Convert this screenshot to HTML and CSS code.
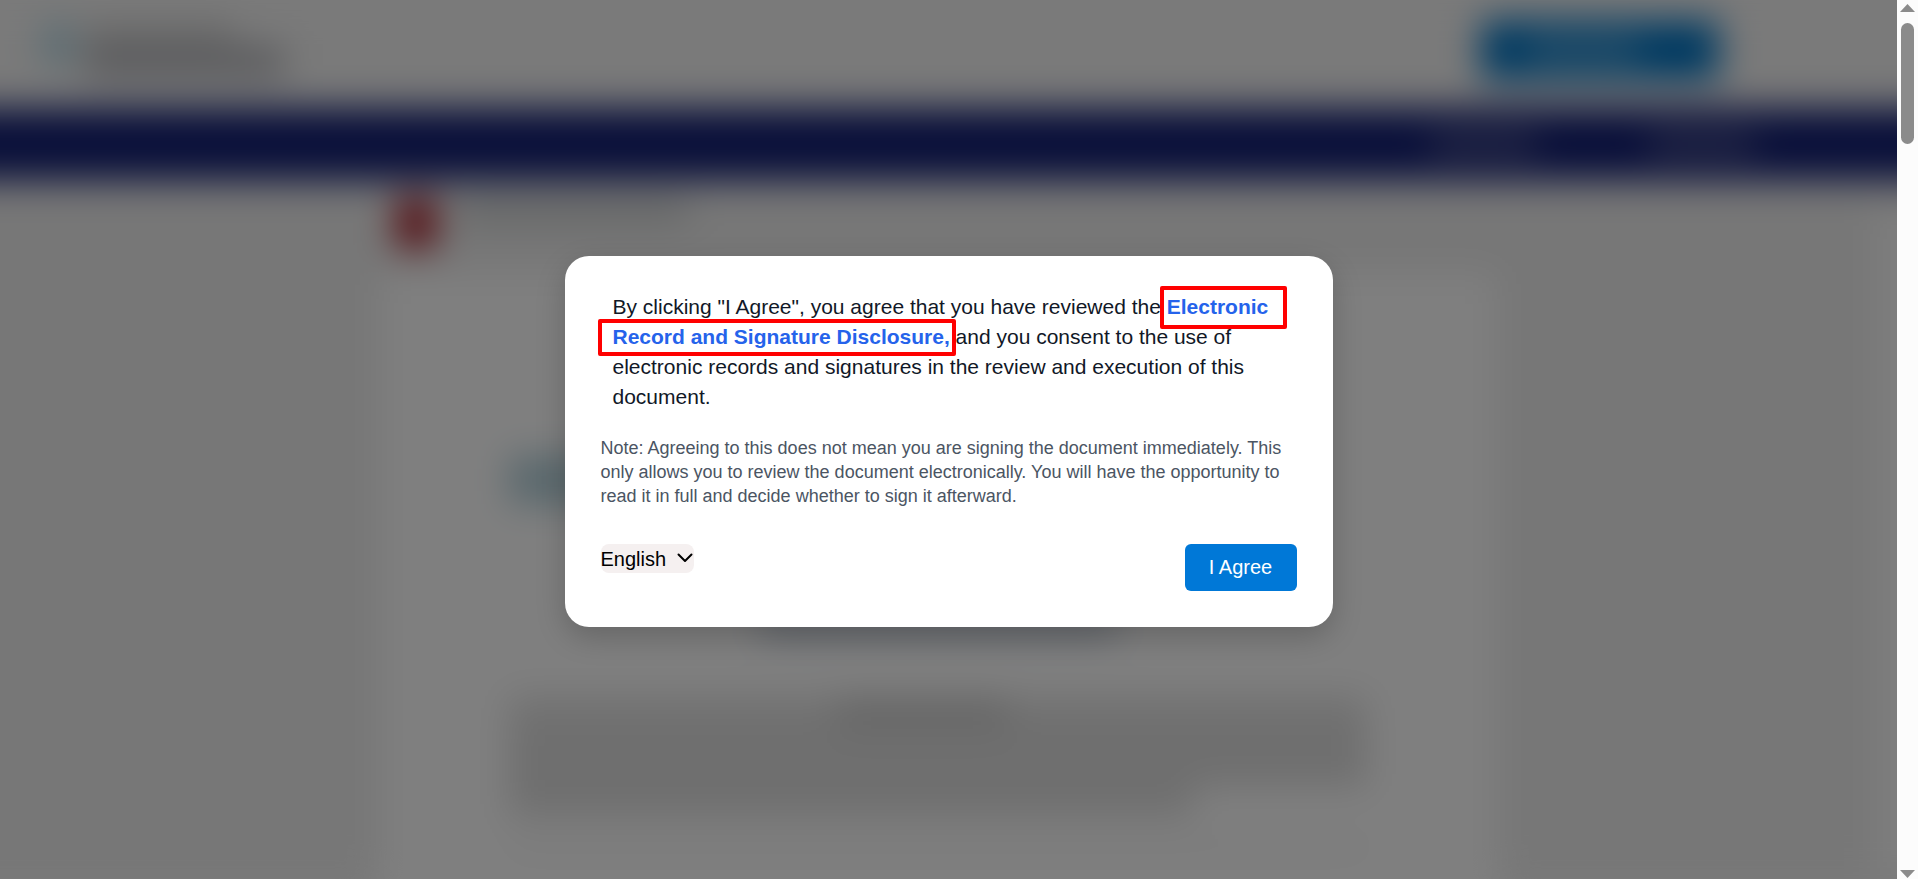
FILE: index.html
```html
<!DOCTYPE html>
<html lang="en">
<head>
<meta charset="utf-8">
<title>Electronic Record and Signature Disclosure</title>
<link rel="stylesheet" href="styles.css">
</head>
<body>
<div class="viewport">
  <div class="stage">
    <div class="page" aria-hidden="true">
      <div class="page-header">
        <div class="brand">
          <span class="brand-mark"></span>
          <span class="brand-lines"><span class="brand-top"></span><span class="brand-name"></span></span>
        </div>
        <div class="cta"><span class="cta-text"></span></div>
      </div>
      <div class="navbar"><span class="nav-item"></span><span class="nav-item"></span></div>
      <div class="reader">
        <div class="reader-body">
          <div class="file-row"><span class="file-icon"></span><span class="file-name"></span></div>
          <div class="sheet">
            <div class="sheet-logo"></div>
            <div class="sheet-title"></div>
            <div class="sheet-text">
              <div class="line line-first"><span class="line-bold"></span></div>
              <div class="line"></div>
              <div class="line"></div>
              <div class="line line-last"></div>
            </div>
            <div class="sheet-rule"></div>
          </div>
        </div>
        <div class="reader-track"></div>
      </div>
    </div>
    <div class="overlay">
      <div class="modal" role="dialog" aria-modal="true" aria-label="Consent">
        <p class="consent">By clicking "I Agree", you agree that you have reviewed the <a class="disclosure" href="#disclosure">Electronic Record and Signature Disclosure,</a> and you consent to the use of electronic records and signatures in the review and execution of this document.</p>
        <p class="note">Note: Agreeing to this does not mean you are signing the document immediately. This only allows you to review the document electronically. You will have the opportunity to read it in full and decide whether to sign it afterward.</p>
        <div class="actions">
          <div class="language">
            <select class="language-select" aria-label="Language"><option>English</option></select>
            <svg class="chevron" viewBox="0 0 16 10" aria-hidden="true"><path d="M1.5 1.5 8 8l6.500-6.500"/></svg>
          </div>
          <button class="agree" type="button">I Agree</button>
        </div>
        <span class="mark mark-first"></span>
        <span class="mark mark-second"></span>
      </div>
    </div>
  </div>
  <div class="scrollbar" aria-hidden="true">
    <svg class="arrow" viewBox="0 0 15 8"><path d="M7.500 0 15 8H0z"/></svg>
    <div class="thumb"></div>
    <svg class="arrow arrow-down" viewBox="0 0 15 8"><path d="M0 0h15L7.500 8z"/></svg>
  </div>
</div>
</body>
</html>
```

FILE: styles.css
```css
* {
  box-sizing: border-box;
}

body {
  margin: 0;
  font-family: "Liberation Sans", Arial, sans-serif;
}

.viewport {
  display: flex;
  height: 100vh;
  overflow: hidden;
}

.stage {
  position: relative;
  flex: 1;
  overflow: hidden;
  background: #f4f4f4;
}

/* Page behind the dialog; it runs past both sides so the blur has no soft edge */
.page {
  display: flex;
  flex-direction: column;
  height: 100%;
  margin: 0 -60px;
  background: #eeeeee;
  filter: blur(18px);
}

.page-header {
  display: flex;
  justify-content: space-between;
  align-items: center;
  height: 108px;
  padding: 0 238px 8px 104px;
  background: #f4f4f4;
}

.brand {
  display: flex;
  gap: 12px;
}

.brand-mark {
  width: 28px;
  height: 44px;
  border-radius: 14px;
  background: #a8d4e4;
}

.brand-lines {
  display: flex;
  flex-direction: column;
  gap: 4px;
  padding-top: 4px;
}

.brand-top {
  width: 150px;
  height: 16px;
  background: #c4c4c4;
}

.brand-name {
  width: 200px;
  height: 32px;
  background: #b6b7bc;
}

.cta {
  display: flex;
  align-items: center;
  width: 238px;
  height: 60px;
  padding-left: 46px;
  border-radius: 6px;
  background: #0074c4;
}

.cta-text {
  width: 112px;
  height: 20px;
  background: #5fa9d8;
}

.navbar {
  display: flex;
  justify-content: flex-end;
  align-items: center;
  gap: 112px;
  height: 72px;
  padding-right: 202px;
  background: #142074;
}

.nav-item {
  width: 106px;
  height: 20px;
  background: #575c92;
}

.reader {
  display: flex;
  flex: 1;
  padding-left: 60px;
}

.reader-body {
  flex: 1;
}

.reader-track {
  width: 82px;
  margin-top: 30px;
  background: #fcfcfc;
}

.file-row {
  display: flex;
  gap: 22px;
  height: 92px;
  padding: 18px 0 0 396px;
}

.file-icon {
  width: 40px;
  height: 50px;
  background: #a81c26;
}

.file-name {
  width: 230px;
  height: 24px;
  background: #c8cbcc;
}

.sheet {
  width: 1118px;
  height: 100%;
  margin: 0 auto;
  padding: 184px 130px 0;
  background: #ffffff;
}

.sheet-logo {
  width: 100px;
  height: 48px;
  background: #b2d0da;
}

.sheet-title {
  width: 356px;
  height: 24px;
  margin: 108px auto 60px;
  background: #bcc6d4;
}

.sheet-text {
  display: flex;
  flex-direction: column;
}

.line {
  height: 30px;
  background: #dedede;
}

.line-first {
  display: flex;
  justify-content: center;
  padding-right: 32px;
  background: #e2e2e2;
}

.line-bold {
  width: 170px;
  background: #cccccc;
}

.line-last {
  width: 684px;
}

.sheet-rule {
  height: 4px;
  margin-top: 28px;
  background: #d8d8d8;
}

/* Consent dialog */
.overlay {
  position: absolute;
  inset: 0;
  display: flex;
  justify-content: center;
  align-items: center;
  padding-top: 4px;
  background: rgba(0, 0, 0, 0.5);
}

.modal {
  position: relative;
  width: 768px;
  padding: 36px;
  border-radius: 24px;
  background: #ffffff;
  box-shadow: 0 10px 30px rgba(0, 0, 0, 0.2);
}

.consent {
  margin: 0 0 24px;
  padding: 0 12px;
  color: #111827;
  font-size: 21px;
  line-height: 30px;
}

.disclosure {
  color: #2563eb;
  font-weight: 700;
  text-decoration: none;
}

.note {
  margin: 0 0 36px;
  color: #4b5563;
  font-size: 18px;
  line-height: 24px;
}

.actions {
  display: flex;
  justify-content: space-between;
  align-items: flex-start;
}

.language {
  position: relative;
  display: flex;
}

.language-select {
  appearance: none;
  width: 93px;
  height: 29px;
  padding: 0;
  border: 0;
  border-radius: 8px;
  background: #f5f0f0;
  color: #000000;
  font-family: inherit;
  font-size: 20px;
}

.chevron {
  position: absolute;
  right: 1px;
  top: 9px;
  width: 16px;
  height: 10px;
  fill: none;
  stroke: #000000;
  stroke-width: 2;
  stroke-linecap: round;
  stroke-linejoin: round;
  pointer-events: none;
}

.agree {
  width: 112px;
  height: 47px;
  padding: 0;
  border: 0;
  border-radius: 6px;
  background: #0078d7;
  color: #ffffff;
  font-family: inherit;
  font-size: 20px;
}

/* Red callout frames over the disclosure link */
.mark {
  position: absolute;
  border: 4px solid #ff0000;
  border-radius: 2px;
  pointer-events: none;
}

.mark-first {
  left: 595px;
  top: 30px;
  width: 127px;
  height: 43px;
}

.mark-second {
  left: 33px;
  top: 63px;
  width: 358px;
  height: 37px;
}

/* Window scrollbar */
.scrollbar {
  display: flex;
  flex-direction: column;
  align-items: center;
  width: 21px;
  padding: 4px 0 1px;
  background: #fcfcfc;
}

.arrow {
  width: 15px;
  height: 8px;
  fill: #8b8b8b;
}

.arrow-down {
  margin-top: auto;
}

.thumb {
  width: 13px;
  height: 121px;
  margin-top: 11px;
  border-radius: 7px;
  background: #8b8b8b;
}
```
